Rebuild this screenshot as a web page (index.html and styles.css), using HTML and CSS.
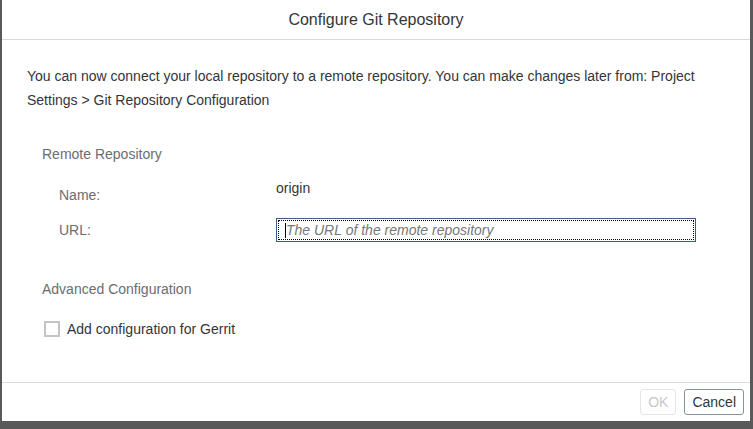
FILE: index.html
```
<!DOCTYPE html>
<html lang="en">
<head>
    <meta charset="UTF-8">
    <meta name="viewport" content="width=device-width, initial-scale=1.0">
    <title>Configure Git Repository</title>
    <link rel="stylesheet" href="styles.css">
</head>
<body>
    <div class="dialog">
        <div class="dialog-header">Configure Git Repository</div>
        <div class="dialog-content">
            <p class="intro">You can now connect your local repository to a remote repository. You can make changes later from: Project Settings &gt; Git Repository Configuration</p>

            <div class="section-title">Remote Repository</div>
            <div class="form">
                <div class="form-row row-name">
                    <label class="form-label">Name:</label>
                    <span class="form-value">origin</span>
                </div>
                <div class="form-row row-url">
                    <label class="form-label" for="url">URL:</label>
                    <div class="input-wrap">
                        <input type="text" id="url" class="form-input" placeholder="The URL of the remote repository">
                    </div>
                </div>
            </div>

            <div class="section-title section-advanced">Advanced Configuration</div>
            <div class="check-row">
                <span class="checkbox"></span>
                <span class="check-label">Add configuration for Gerrit</span>
            </div>
        </div>
        <div class="dialog-footer">
            <button type="button" class="btn" disabled>OK</button>
            <button type="button" class="btn">Cancel</button>
        </div>
    </div>
</body>
</html>
```
FILE: styles.css
```
body {
    margin: 0;
    background-color: #595959;
    font-family: "Liberation Sans", Arial, sans-serif;
    font-size: 14px;
    color: #32363a;
}

.dialog {
    margin-left: 2px;
    width: 748px;
    height: 421px;
    background-color: #fff;
    display: flex;
    flex-direction: column;
}

.dialog-header {
    height: 39px;
    line-height: 40px;
    text-align: center;
    font-size: 16px;
    border-bottom: 1px solid #d9d9d9;
    flex-shrink: 0;
}

.dialog-content {
    flex: 1;
    padding: 24px 20px 0 25px;
}

.intro {
    margin: 0;
    line-height: 24px;
}

.section-title {
    margin: 30px 0 0 15px;
    line-height: 24px;
    color: #6a6d70;
}

.form {
    margin: 10px 0 0 32px;
}

.form-row {
    display: flex;
}

.row-name {
    height: 26px;
    align-items: flex-start;
}

.row-url {
    margin-top: 16px;
    align-items: center;
}

.form-label {
    width: 217px;
    line-height: 24px;
    color: #6a6d70;
}

.row-name .form-label {
    margin-top: 7px;
}

.form-value {
    line-height: 24px;
}

.input-wrap {
    position: relative;
}

.input-wrap::before {
    content: "";
    position: absolute;
    left: 9px;
    top: 5px;
    width: 1px;
    height: 15px;
    background-color: #000;
}

.form-input {
    box-sizing: border-box;
    width: 420px;
    height: 24px;
    margin: 0;
    padding: 0 8px 0 9px;
    border: 1px solid #3b5c7e;
    outline: 1px dotted #000;
    outline-offset: -3px;
    font-family: "Liberation Sans", Arial, sans-serif;
    font-size: 14px;
    color: #32363a;
}

.form-input::placeholder {
    color: #74777a;
    font-style: italic;
}

.section-advanced {
    margin-top: 35px;
}

.check-row {
    display: flex;
    align-items: center;
    margin: 16px 0 0 17px;
    height: 24px;
}

.checkbox {
    box-sizing: border-box;
    width: 16px;
    height: 16px;
    border: 2px solid #c4c4c4;
    margin-right: 7px;
}

.check-label {
    color: #32363a;
}

.dialog-footer {
    height: 38px;
    border-top: 1px solid #d9d9d9;
    display: flex;
    justify-content: flex-end;
    align-items: center;
    gap: 8px;
    padding-right: 6px;
    flex-shrink: 0;
}

.btn {
    height: 26px;
    padding: 0 7px;
    background-color: #fff;
    border: 1px solid #89919a;
    border-radius: 3px;
    font-family: "Liberation Sans", Arial, sans-serif;
    font-size: 14px;
    color: #32363a;
    cursor: pointer;
}

.btn:disabled {
    border-color: #e2e4e6;
    color: #c6c8ca;
    cursor: default;
}
```
